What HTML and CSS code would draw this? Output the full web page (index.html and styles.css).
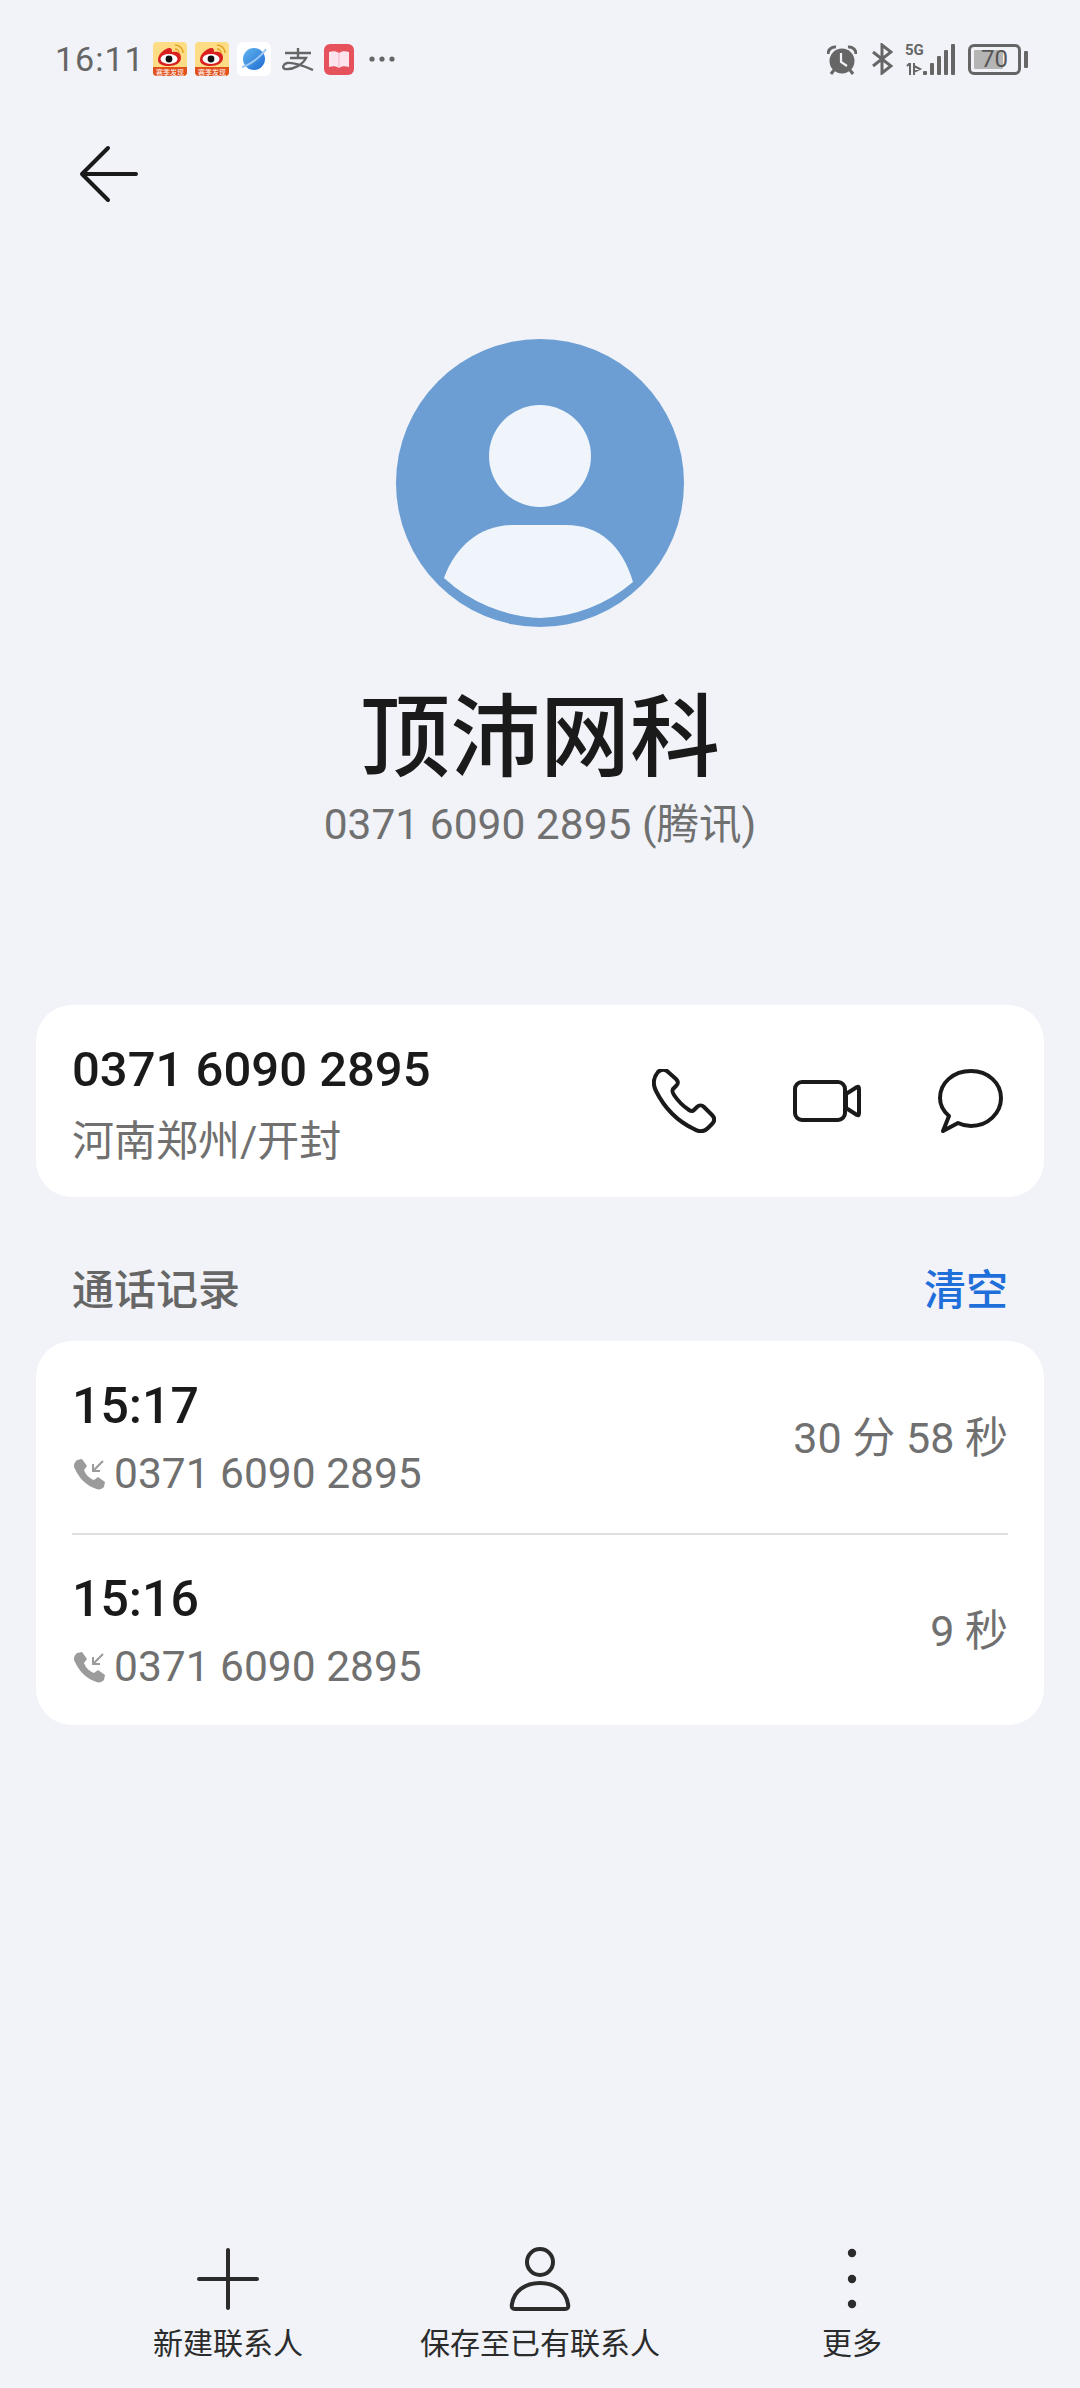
FILE: index.html
```html
<!DOCTYPE html>
<html lang="zh">
<head>
<meta charset="utf-8">
<title>顶沛网科</title>
<link rel="stylesheet" href="styles.css">
</head>
<body>
<div class="app">
  <header class="status">
    <div class="status-left">
      <span class="clock">16:11</span>
      <svg class="notif" viewBox="0 0 34 34"><rect width="34" height="34" rx="4" fill="#fcdc84"/><path d="M0 25H34V30a4 4 0 0 1-4 4H4a4 4 0 0 1-4-4Z" fill="#e2501c"/><path d="M5 18c0-6 6-11 11-12 3 0 3 2 3 4 6-1 9 1 9 6 0 5-6 8-12 8S5 22 5 18Z" fill="#d9201f"/><ellipse cx="16" cy="17" rx="8.5" ry="5" fill="#fff"/><circle cx="16" cy="17" r="3.4" fill="#111"/><path d="M22 3a8 8 0 0 1 8 8M22 7a4 4 0 0 1 4 4" fill="none" stroke="#e3a11f" stroke-width="1.4"/><text x="17" y="32.500" class="wb-text">赛季发现</text></svg>
      <svg class="notif" viewBox="0 0 34 34"><rect width="34" height="34" rx="4" fill="#fcdc84"/><path d="M0 25H34V30a4 4 0 0 1-4 4H4a4 4 0 0 1-4-4Z" fill="#e2501c"/><path d="M5 18c0-6 6-11 11-12 3 0 3 2 3 4 6-1 9 1 9 6 0 5-6 8-12 8S5 22 5 18Z" fill="#d9201f"/><ellipse cx="16" cy="17" rx="8.5" ry="5" fill="#fff"/><circle cx="16" cy="17" r="3.4" fill="#111"/><path d="M22 3a8 8 0 0 1 8 8M22 7a4 4 0 0 1 4 4" fill="none" stroke="#e3a11f" stroke-width="1.4"/><text x="17" y="32.500" class="wb-text">赛季发现</text></svg>
      <svg class="notif" viewBox="0 0 34 34"><rect width="34" height="34" rx="6" fill="#fff"/><defs><linearGradient id="pl" x1="0" y1="0" x2="1" y2="1"><stop offset="0" stop-color="#63b5f0"/><stop offset="1" stop-color="#1f6bd0"/></linearGradient></defs><circle cx="17" cy="17" r="11" fill="url(#pl)"/><path d="M5 25C11 24 24 15 29 7" fill="none" stroke="#9cc8f2" stroke-width="2"/></svg>
      <svg class="ali" viewBox="0 0 32 24"><path d="M3 6H29M16 1V11M8 11H24C21 17 12 23 3 22 0 21 1 17 5 16 12 15 22 19 31 23" fill="none" stroke="#666" stroke-width="2.4"/></svg>
      <svg class="notif book" viewBox="0 0 30 31"><rect width="30" height="31" rx="6" fill="#e6525c"/><path d="M5 8c4-1 7-1 10 1 3-2 6-2 10-1v15c-4-1-7-1-10 1-3-2-6-2-10-1Z" fill="#fde3ec"/><path d="M15 9v15" stroke="#f3b3c3" stroke-width="1"/></svg>
      <svg class="more-dots" viewBox="0 0 26 6"><circle cx="3" cy="3" r="2.6"/><circle cx="13" cy="3" r="2.6"/><circle cx="23" cy="3" r="2.6"/></svg>
    </div>
    <div class="status-right">
      <svg class="alarm" viewBox="0 0 30 31"><circle cx="15" cy="17" r="12.500" fill="#666"/><path d="M1 10a7 7 0 0 1 8-7M29 10a7 7 0 0 0-8-7M7 26l-3 4M23 26l3 4" fill="none" stroke="#666" stroke-width="3"/><path d="M14 9v9l6 4" fill="none" stroke="#f1f3f8" stroke-width="2.2"/></svg>
      <svg class="bt" viewBox="0 0 22 32"><path d="M2 9l18 14-9 7V2l9 7L2 23" fill="none" stroke="#666" stroke-width="3"/></svg>
      <div class="net">
        <div class="net-labels"><span class="net-5g">5G</span><svg class="net-arrows" viewBox="0 0 18 12"><path d="M5 0v12M2 3l3-3M9 0v12M9 3l6 3-6 3Z" fill="none" stroke="#666" stroke-width="2"/></svg></div>
        <div class="bars"><i class="b0"></i><i class="b1"></i><i class="b2"></i><i class="b3"></i><i class="b4"></i></div>
      </div>
      <div class="battery"><div class="battery-body"><div class="battery-fill"></div><span class="battery-num">70</span></div><div class="battery-cap"></div></div>
    </div>
  </header>

  <nav class="topbar">
    <svg class="back" viewBox="0 0 60 58"><path d="M57 29H4M29 3 3 29l26 26" fill="none" stroke="#1a1a1a" stroke-width="4" stroke-linecap="round" stroke-linejoin="round"/></svg>
  </nav>

  <section class="profile">
    <svg class="avatar" viewBox="0 0 288 288"><circle cx="144" cy="144" r="144" fill="#6c9ed3"/><circle cx="144" cy="117" r="51" fill="#f0f5fb"/><path d="M48 239C60 206 85 186 118 186H170C203 186 226 206 237 243A150 150 0 0 1 144 279 150 150 0 0 1 48 239Z" fill="#f0f5fb"/></svg>
    <h1 class="name">顶沛网科</h1>
    <p class="subname">0371 6090 2895 (腾讯)</p>
  </section>

  <section class="card contact">
    <div class="contact-info">
      <div class="contact-num">0371 6090 2895</div>
      <div class="contact-loc">河南郑州/开封</div>
    </div>
    <div class="actions">
      <svg class="ic-phone" viewBox="0 0 64 64"><path d="M6 3C9 0 12 0 15 2L24 10C27 13 26 15 24 17L21 20C20 22 20 23 22 26 26 32 31 37 37 41 40 43 41 42 43 40L45 38C47 36 50 36 52 38L60 46C63 49 63 52 60 55L56 59C52 63 47 63 42 60 25 52 12 38 4 22 1 16 1 9 6 3Z"/></svg>
      <svg class="ic-video" viewBox="0 0 68 42"><rect x="2" y="2" width="50" height="38" rx="7"/><path d="M53 14 64 7Q66 6 66 9V33Q66 36 64 35L53 28Z"/></svg>
      <svg class="ic-msg" viewBox="0 0 65 64"><path d="M11 47C4 41 2 35 2 29 2 14 15 2 33 2 50 2 63 14 63 29 63 44 50 57 33 57 28 57 24 56 20 54L5 62Z"/></svg>
    </div>
  </section>

  <div class="section-head">
    <span class="section-title">通话记录</span>
    <span class="section-action">清空</span>
  </div>

  <section class="card log">
    <div class="log-row">
      <div class="log-main">
        <div class="log-time">15:17</div>
        <div class="log-num"><svg class="ic-in" viewBox="0 0 32 32"><path d="M3 2 8 1l5 7-3 4c2 5 5 8 10 10l4-3 7 5-1 5c-3 3-6 3-10 1C12 27 5 20 1 11-1 8 0 5 3 2Z" fill="#9b9b9b"/><path d="M29 3 19 13M19 6v7h7" fill="none" stroke="#9b9b9b" stroke-width="2"/></svg>0371 6090 2895</div>
      </div>
      <div class="log-dur">30 分 58 秒</div>
    </div>
    <div class="log-row">
      <div class="log-main">
        <div class="log-time">15:16</div>
        <div class="log-num"><svg class="ic-in" viewBox="0 0 32 32"><path d="M3 2 8 1l5 7-3 4c2 5 5 8 10 10l4-3 7 5-1 5c-3 3-6 3-10 1C12 27 5 20 1 11-1 8 0 5 3 2Z" fill="#9b9b9b"/><path d="M29 3 19 13M19 6v7h7" fill="none" stroke="#9b9b9b" stroke-width="2"/></svg>0371 6090 2895</div>
      </div>
      <div class="log-dur">9 秒</div>
    </div>
  </section>

  <footer class="bottom">
    <div class="bottom-item">
      <svg class="bottom-ic" viewBox="0 0 64 64"><path d="M32 3V61M3 32H61" fill="none" stroke="#2b2b2b" stroke-width="4" stroke-linecap="round"/></svg>
      <span class="bottom-label">新建联系人</span>
    </div>
    <div class="bottom-item">
      <svg class="bottom-ic" viewBox="0 0 64 64"><circle cx="32" cy="15" r="13" fill="none" stroke="#2b2b2b" stroke-width="4"/><path d="M7 62C5 62 3 61 4 57 6 44 17 36 32 36S58 44 60 57C61 61 59 62 57 62Z" fill="none" stroke="#2b2b2b" stroke-width="4"/></svg>
      <span class="bottom-label">保存至已有联系人</span>
    </div>
    <div class="bottom-item">
      <svg class="bottom-ic" viewBox="0 0 64 64"><circle cx="32" cy="6" r="4.2" fill="#2b2b2b"/><circle cx="32" cy="32" r="4.2" fill="#2b2b2b"/><circle cx="32" cy="57" r="4.2" fill="#2b2b2b"/></svg>
      <span class="bottom-label">更多</span>
    </div>
  </footer>
</div>
</body>
</html>
```

FILE: styles.css
```css
* { box-sizing: border-box; }
html, body { margin: 0; padding: 0; }
body {
  background: #f1f3f8;
  font-family: Roboto, "Noto Sans CJK SC", sans-serif;
  color: #1a1a1a;
}
.app {
  width: 1080px;
  height: 2388px;
  display: flex;
  flex-direction: column;
  overflow: hidden;
}

/* status bar */
.status {
  height: 118px;
  padding: 41px 52px 0 55px;
  display: flex;
  justify-content: space-between;
  align-items: flex-start;
}
.status-left, .status-right { display: flex; align-items: center; height: 36px; }
.clock { font-size: 34px; color: #666; letter-spacing: 1px; width: 98px; line-height: 36px; }
.notif { width: 34px; height: 34px; margin-right: 8px; }
.wb-text { font-size: 7px; fill: #fff; text-anchor: middle; font-family: "Noto Sans CJK SC", sans-serif; }
.ali { width: 32px; height: 24px; margin: 0 10px 0 3px; }
.book { width: 30px; height: 31px; margin-right: 15px; }
.more-dots { width: 26px; height: 6px; fill: #666; }
.alarm { width: 30px; height: 31px; margin-right: 14px; }
.bt { width: 22px; height: 32px; margin-right: 12px; }
.net { display: flex; align-items: flex-end; height: 32px; margin-right: 13px; }
.net-labels { display: flex; flex-direction: column; justify-content: space-between; height: 32px; width: 18px; }
.net-5g { font-size: 15px; line-height: 15px; font-weight: 700; color: #666; }
.net-arrows { width: 18px; height: 12px; }
.bars { display: flex; align-items: flex-end; gap: 3px; height: 32px; }
.bars i { display: block; width: 4px; background: #666; border-radius: 1px; }
.bars .b0 { height: 4px; }
.bars .b1 { height: 12px; }
.bars .b2 { height: 19px; }
.bars .b3 { height: 25px; }
.bars .b4 { height: 31px; }
.battery { display: flex; align-items: center; gap: 3px; }
.battery-body {
  position: relative;
  width: 53px;
  height: 31px;
  border: 3px solid #666;
  border-radius: 6px;
  padding: 3px;
}
.battery-fill { width: 70%; height: 100%; background: #b5b5b5; border-radius: 1px; }
.battery-num {
  position: absolute;
  inset: 0;
  text-align: center;
  font-size: 24px;
  line-height: 25px;
  color: #555;
}
.battery-cap { width: 4px; height: 17px; background: #666; border-radius: 1px; }

/* top bar */
.topbar { height: 221px; padding: 27px 0 0 79px; }
.back { display: block; width: 60px; height: 58px; }

/* profile */
.profile { display: flex; flex-direction: column; align-items: center; height: 666px; }
.avatar { display: block; width: 288px; height: 288px; }
.name { margin: 52px 0 0; font-size: 90px; line-height: 120px; font-weight: 500; color: #1a1a1a; }
.subname { margin: -2px 0 0; font-size: 42.5px; line-height: 56px; color: #707070; }

/* cards */
.card { margin: 0 36px; background: #fff; border-radius: 36px; }
.contact {
  height: 192px;
  padding: 5px 41px 0 36px;
  display: flex;
  align-items: center;
  justify-content: space-between;
}
.contact-num { font-size: 49px; line-height: 66px; font-weight: 500; }
.contact-loc { font-size: 42px; line-height: 56px; color: #707070; margin-top: 11px; }
.actions { display: flex; align-items: center; gap: 77px; margin-top: -5px; }
.actions svg { fill: none; stroke: #1a1a1a; stroke-width: 4; stroke-linejoin: round; stroke-linecap: round; display: block; }
.ic-phone { width: 64px; height: 64px; }
.ic-video { width: 68px; height: 42px; }
.ic-msg { width: 65px; height: 64px; }

.section-head {
  height: 144px;
  padding: 66px 72px 0;
  display: flex;
  justify-content: space-between;
  font-size: 42px;
  line-height: 56px;
  font-weight: 500;
}
.section-title { color: #666; }
.section-action { color: #1f6fdb; }

.log { padding: 0 36px; }
.log-row {
  height: 192px;
  display: flex;
  align-items: center;
  justify-content: space-between;
}
.log-row + .log-row { border-top: 2px solid #dfdfdf; }
.log-main { padding-top: 3px; }
.log-time { font-size: 50px; line-height: 62px; font-weight: 500; }
.log-num { display: flex; align-items: center; font-size: 42.5px; line-height: 56px; color: #707070; margin-top: 9px; }
.ic-in { width: 32px; height: 32px; margin: 0 8px 0 2px; }
.log-dur { font-size: 43px; color: #707070; margin-top: -6px; }

/* bottom */
.bottom {
  margin-top: auto;
  padding: 0 72px 23px;
  display: grid;
  grid-template-columns: repeat(3, 312px);
}
.bottom-item { display: flex; flex-direction: column; align-items: center; }
.bottom-ic { display: block; width: 64px; height: 64px; }
.bottom-label { font-size: 30px; line-height: 42px; margin-top: 12px; color: #2b2b2b; white-space: nowrap; }
```
